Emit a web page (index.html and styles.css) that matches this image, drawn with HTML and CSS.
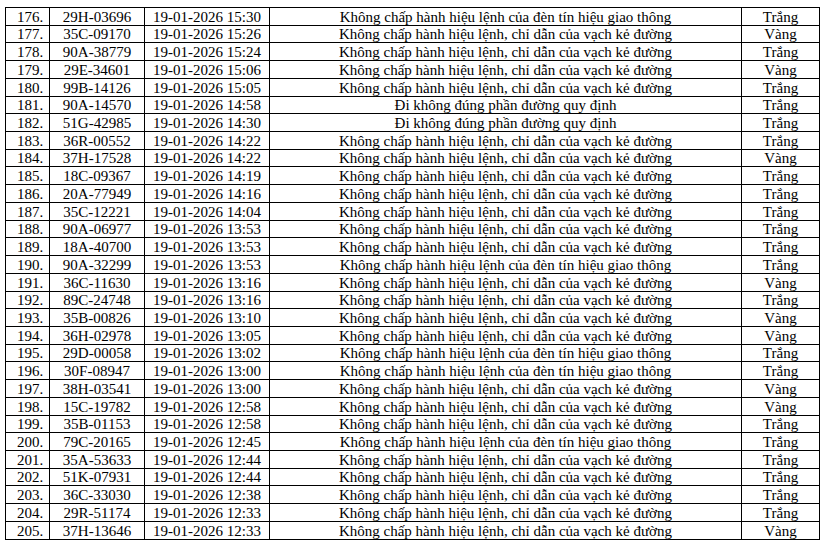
FILE: index.html
```html
<!DOCTYPE html>
<html lang="vi">
<head>
<meta charset="utf-8">
<link rel="stylesheet" href="styles.css">
</head>
<body>
<table class="list">
<colgroup>
<col class="c-no"><col class="c-plate"><col class="c-time"><col class="c-viol"><col class="c-color">
</colgroup>
<tbody>
<tr><td class="no">176.</td><td>29H-03696</td><td>19-01-2026 15:30</td><td>Không chấp hành hiệu lệnh của đèn tín hiệu giao thông</td><td>Trắng</td></tr>
<tr><td class="no">177.</td><td>35C-09170</td><td>19-01-2026 15:26</td><td>Không chấp hành hiệu lệnh, chỉ dẫn của vạch kẻ đường</td><td>Vàng</td></tr>
<tr><td class="no">178.</td><td>90A-38779</td><td>19-01-2026 15:24</td><td>Không chấp hành hiệu lệnh, chỉ dẫn của vạch kẻ đường</td><td>Trắng</td></tr>
<tr><td class="no">179.</td><td>29E-34601</td><td>19-01-2026 15:06</td><td>Không chấp hành hiệu lệnh, chỉ dẫn của vạch kẻ đường</td><td>Vàng</td></tr>
<tr><td class="no">180.</td><td>99B-14126</td><td>19-01-2026 15:05</td><td>Không chấp hành hiệu lệnh, chỉ dẫn của vạch kẻ đường</td><td>Trắng</td></tr>
<tr><td class="no">181.</td><td>90A-14570</td><td>19-01-2026 14:58</td><td>Đi không đúng phần đường quy định</td><td>Trắng</td></tr>
<tr><td class="no">182.</td><td>51G-42985</td><td>19-01-2026 14:30</td><td>Đi không đúng phần đường quy định</td><td>Trắng</td></tr>
<tr><td class="no">183.</td><td>36R-00552</td><td>19-01-2026 14:22</td><td>Không chấp hành hiệu lệnh, chỉ dẫn của vạch kẻ đường</td><td>Trắng</td></tr>
<tr><td class="no">184.</td><td>37H-17528</td><td>19-01-2026 14:22</td><td>Không chấp hành hiệu lệnh, chỉ dẫn của vạch kẻ đường</td><td>Vàng</td></tr>
<tr><td class="no">185.</td><td>18C-09367</td><td>19-01-2026 14:19</td><td>Không chấp hành hiệu lệnh, chỉ dẫn của vạch kẻ đường</td><td>Trắng</td></tr>
<tr><td class="no">186.</td><td>20A-77949</td><td>19-01-2026 14:16</td><td>Không chấp hành hiệu lệnh, chỉ dẫn của vạch kẻ đường</td><td>Trắng</td></tr>
<tr><td class="no">187.</td><td>35C-12221</td><td>19-01-2026 14:04</td><td>Không chấp hành hiệu lệnh, chỉ dẫn của vạch kẻ đường</td><td>Trắng</td></tr>
<tr><td class="no">188.</td><td>90A-06977</td><td>19-01-2026 13:53</td><td>Không chấp hành hiệu lệnh, chỉ dẫn của vạch kẻ đường</td><td>Trắng</td></tr>
<tr><td class="no">189.</td><td>18A-40700</td><td>19-01-2026 13:53</td><td>Không chấp hành hiệu lệnh, chỉ dẫn của vạch kẻ đường</td><td>Trắng</td></tr>
<tr><td class="no">190.</td><td>90A-32299</td><td>19-01-2026 13:53</td><td>Không chấp hành hiệu lệnh của đèn tín hiệu giao thông</td><td>Trắng</td></tr>
<tr><td class="no">191.</td><td>36C-11630</td><td>19-01-2026 13:16</td><td>Không chấp hành hiệu lệnh, chỉ dẫn của vạch kẻ đường</td><td>Vàng</td></tr>
<tr><td class="no">192.</td><td>89C-24748</td><td>19-01-2026 13:16</td><td>Không chấp hành hiệu lệnh, chỉ dẫn của vạch kẻ đường</td><td>Trắng</td></tr>
<tr><td class="no">193.</td><td>35B-00826</td><td>19-01-2026 13:10</td><td>Không chấp hành hiệu lệnh, chỉ dẫn của vạch kẻ đường</td><td>Vàng</td></tr>
<tr><td class="no">194.</td><td>36H-02978</td><td>19-01-2026 13:05</td><td>Không chấp hành hiệu lệnh, chỉ dẫn của vạch kẻ đường</td><td>Vàng</td></tr>
<tr><td class="no">195.</td><td>29D-00058</td><td>19-01-2026 13:02</td><td>Không chấp hành hiệu lệnh của đèn tín hiệu giao thông</td><td>Trắng</td></tr>
<tr><td class="no">196.</td><td>30F-08947</td><td>19-01-2026 13:00</td><td>Không chấp hành hiệu lệnh của đèn tín hiệu giao thông</td><td>Trắng</td></tr>
<tr><td class="no">197.</td><td>38H-03541</td><td>19-01-2026 13:00</td><td>Không chấp hành hiệu lệnh, chỉ dẫn của vạch kẻ đường</td><td>Vàng</td></tr>
<tr><td class="no">198.</td><td>15C-19782</td><td>19-01-2026 12:58</td><td>Không chấp hành hiệu lệnh, chỉ dẫn của vạch kẻ đường</td><td>Vàng</td></tr>
<tr><td class="no">199.</td><td>35B-01153</td><td>19-01-2026 12:58</td><td>Không chấp hành hiệu lệnh, chỉ dẫn của vạch kẻ đường</td><td>Trắng</td></tr>
<tr><td class="no">200.</td><td>79C-20165</td><td>19-01-2026 12:45</td><td>Không chấp hành hiệu lệnh của đèn tín hiệu giao thông</td><td>Trắng</td></tr>
<tr><td class="no">201.</td><td>35A-53633</td><td>19-01-2026 12:44</td><td>Không chấp hành hiệu lệnh, chỉ dẫn của vạch kẻ đường</td><td>Trắng</td></tr>
<tr><td class="no">202.</td><td>51K-07931</td><td>19-01-2026 12:44</td><td>Không chấp hành hiệu lệnh, chỉ dẫn của vạch kẻ đường</td><td>Trắng</td></tr>
<tr><td class="no">203.</td><td>36C-33030</td><td>19-01-2026 12:38</td><td>Không chấp hành hiệu lệnh, chỉ dẫn của vạch kẻ đường</td><td>Trắng</td></tr>
<tr><td class="no">204.</td><td>29R-51174</td><td>19-01-2026 12:33</td><td>Không chấp hành hiệu lệnh, chỉ dẫn của vạch kẻ đường</td><td>Trắng</td></tr>
<tr><td class="no">205.</td><td>37H-13646</td><td>19-01-2026 12:33</td><td>Không chấp hành hiệu lệnh, chỉ dẫn của vạch kẻ đường</td><td>Vàng</td></tr>
</tbody>
</table>
</body>
</html>
```
FILE: styles.css
```css
html, body {
  margin: 0;
  padding: 0;
  background: #fff;
}
body {
  padding: 7px 0 0 5px;
  font-family: "Liberation Serif", "Times New Roman", serif;
  font-size: 15px;
  color: #000;
}
.list {
  border-collapse: collapse;
  table-layout: fixed;
  width: 815px;
}
.c-no { width: 44px; }
.c-plate { width: 95px; }
.c-time { width: 125px; }
.c-viol { width: 472px; }
.c-color { width: 78px; }
.list tr {
  height: 17.73px;
}
.list td {
  border: 1px solid #000;
  height: 16.73px;
  padding: 0;
  text-align: center;
  vertical-align: bottom;
  line-height: 15px;
  white-space: nowrap;
  overflow: hidden;
}
.list td.no {
  padding-left: 5px;
}
```
